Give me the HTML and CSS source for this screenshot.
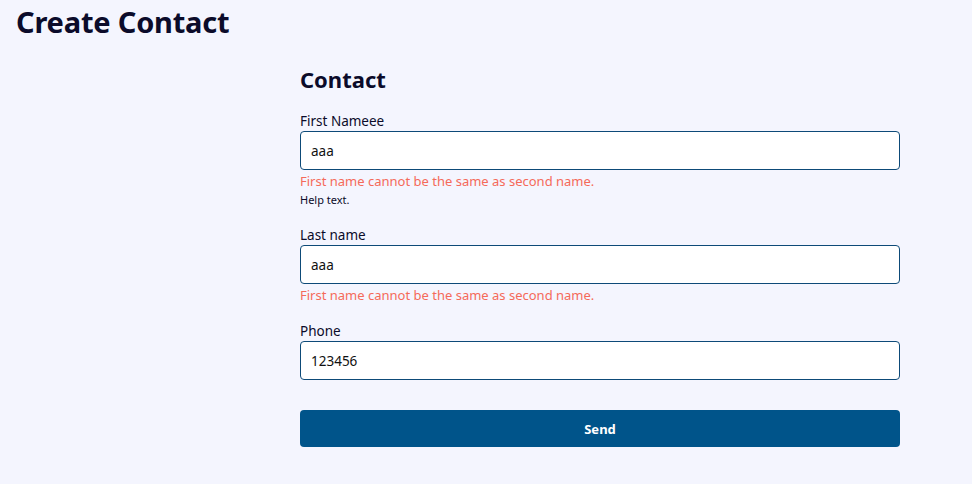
FILE: index.html
```html
<!DOCTYPE html>
<html lang="en">
<head>
<meta charset="utf-8">
<title>Create Contact</title>
<link rel="stylesheet" href="styles.css">
</head>
<body>
<h1 class="page-title">Create Contact</h1>
<div class="layout">
  <aside class="side"></aside>
  <form class="contact-form">
    <h2 class="form-title">Contact</h2>
    <div class="field">
      <label class="field-label" for="first">First Nameee</label>
      <input class="field-input" id="first" type="text" value="aaa">
      <div class="field-error">First name cannot be the same as second name.</div>
      <div class="field-help">Help text.</div>
    </div>
    <div class="field">
      <label class="field-label" for="last">Last name</label>
      <input class="field-input" id="last" type="text" value="aaa">
      <div class="field-error">First name cannot be the same as second name.</div>
    </div>
    <div class="field">
      <label class="field-label" for="phone">Phone</label>
      <input class="field-input" id="phone" type="text" value="123456">
    </div>
    <button class="send-btn" type="button">Send</button>
  </form>
</div>
</body>
</html>
```
FILE: styles.css
```css
* { box-sizing: border-box; }
html, body { margin: 0; padding: 0; }
body {
  background: #f4f5fe;
  font-family: "Noto Sans", "Open Sans", sans-serif;
  color: #0b0b2a;
  width: 972px;
  height: 484px;
  overflow: hidden;
}
.page-title {
  margin: 0;
  padding: 2px 0 0 16px;
  font-size: 29px;
  font-weight: 700;
  line-height: 40px;
  letter-spacing: -0.2px;
}
.layout {
  display: grid;
  grid-template-columns: 300px 600px;
  padding-top: 22px;
}
.contact-form {
  display: flex;
  flex-direction: column;
}
.form-title {
  margin: 0 0 18px;
  font-size: 22px;
  font-weight: 700;
  line-height: 30px;
}
.field {
  display: flex;
  flex-direction: column;
  margin-bottom: 18px;
}
.field-label {
  font-size: 13.5px;
  line-height: 18px;
  margin-bottom: 1px;
}
.field-input {
  height: 39px;
  border: 1px solid #0d4a78;
  border-radius: 4px;
  background: #fff;
  padding: 0 10px;
  font-family: inherit;
  font-size: 13.5px;
  color: #111;
  outline: none;
}
.field-error {
  margin-top: 2px;
  font-size: 13px;
  line-height: 18px;
  color: #f46a5a;
}
.field-help {
  margin-top: 2px;
  font-size: 11px;
  line-height: 16px;
}
.send-btn {
  margin-top: 12px;
  height: 37px;
  border: none;
  border-radius: 4px;
  background: #00548a;
  color: #fff;
  font-family: inherit;
  font-size: 13px;
  font-weight: 700;
}
```
